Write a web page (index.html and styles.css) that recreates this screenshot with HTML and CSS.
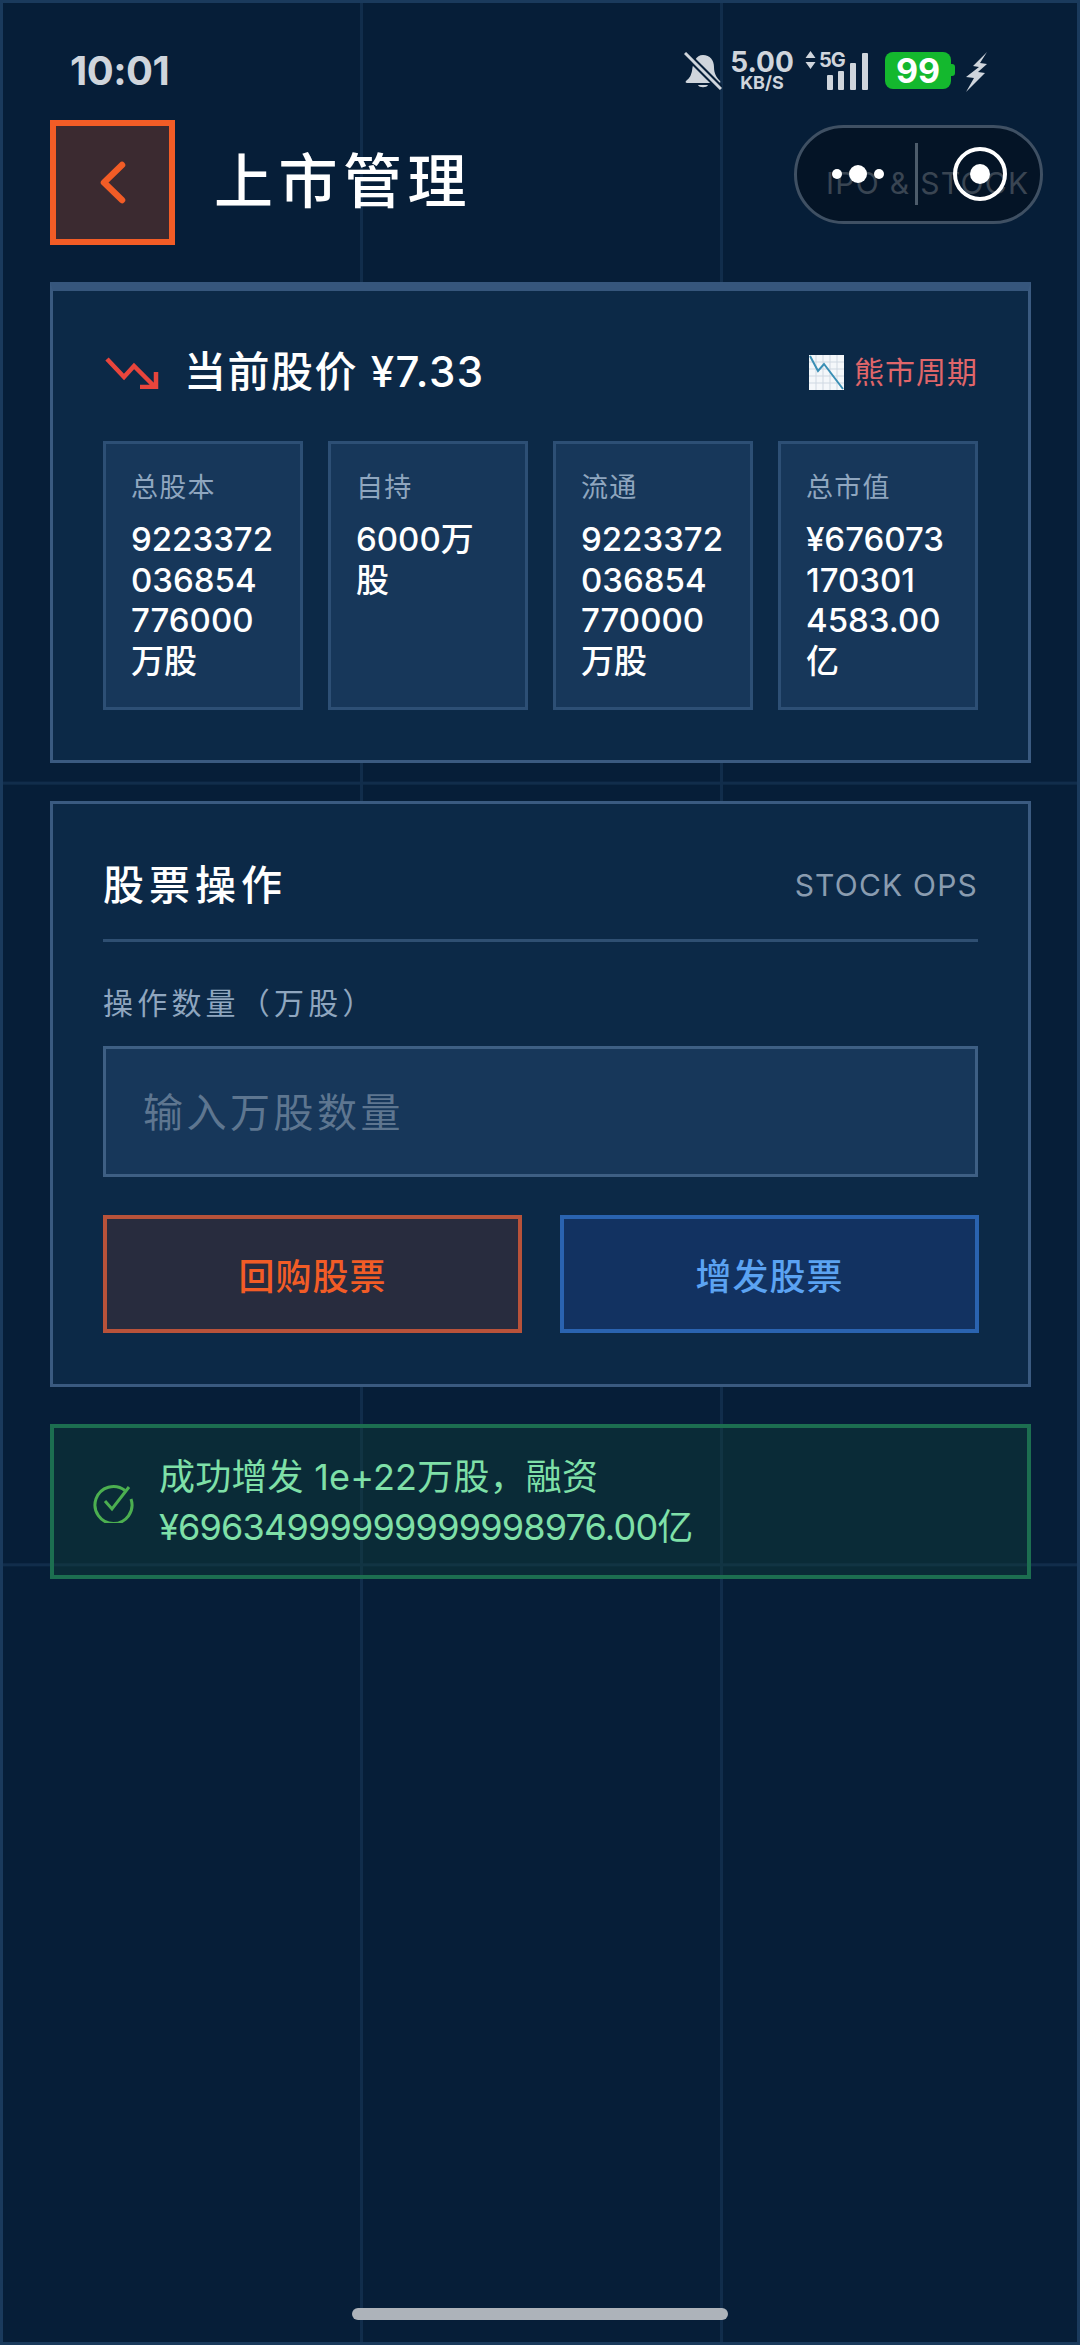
FILE: index.html
```html
<!DOCTYPE html>
<html lang="zh-CN">
<head>
<meta charset="utf-8">
<title>上市管理</title>
<link rel="stylesheet" href="styles.css">
</head>
<body>
<div class="page">
  <div class="statusbar">
    <span class="time">10:01</span>
    <div class="status-icons">
      <svg class="ic-bell" width="38" height="38" viewBox="0 0 38 38">
        <path d="M19 3c7 0 11 5 11 12 0 6 2 10 6 14 1 1 0 2-1 2H3c-1 0-2-1-1-2 4-3 5-6 6-10 1-9 4-16 11-16z" fill="#cfd5dc"/>
        <path d="M14 33h10c-1 3-9 3-10 0z" fill="#cfd5dc"/>
        <path d="M1 1l36 36" stroke="#061e38" stroke-width="7"/>
        <path d="M1 1l36 36" stroke="#cfd5dc" stroke-width="3"/>
      </svg>
      <div class="speed"><span class="speed-num">5.00</span><span class="speed-unit">KB/S</span></div>
      <div class="net">
        <svg class="ic-updown" width="11" height="18" viewBox="0 0 11 18"><path d="M5.500 0l5 7H.5zM5.500 18l5-7H.5z" fill="#cfd5dc"/></svg>
        <span class="net-5g">5G</span>
        <svg class="ic-signal" width="41" height="38" viewBox="0 0 41 38">
          <rect x="0" y="23" width="6" height="15" rx="1" fill="#cfd5dc"/>
          <rect x="11" y="19" width="6" height="19" rx="1" fill="#cfd5dc"/>
          <rect x="23" y="11" width="6" height="27" rx="1" fill="#cfd5dc"/>
          <rect x="35" y="1" width="6" height="37" rx="1" fill="#cfd5dc"/>
        </svg>
      </div>
      <div class="battery"><span class="battery-num">99</span><span class="battery-tip"></span></div>
      <svg class="ic-bolt" width="23" height="40" viewBox="0 0 23 40">
        <path d="M22 0L8 14l6 1L1 25l8 1-8 14 19-19-7-1 9-8-7-1z" fill="#cfd5dc"/>
      </svg>
    </div>
  </div>

  <header class="topbar">
    <div class="back">
      <svg width="27" height="43" viewBox="0 0 27 43"><path d="M23 4L5 21.500 23 39" fill="none" stroke="#f25c26" stroke-width="6.500" stroke-linecap="round" stroke-linejoin="round"/></svg>
    </div>
    <h1 class="title">上市管理</h1>
    <span class="tagline">IPO &amp; STOCK</span>
    <div class="capsule">
      <svg class="capsule-dots" width="54" height="20" viewBox="0 0 54 20">
        <circle cx="5" cy="10" r="5" fill="#fff"/>
        <circle cx="26" cy="10" r="9" fill="#fff"/>
        <circle cx="47" cy="10" r="5" fill="#fff"/>
      </svg>
      <span class="capsule-sep"></span>
      <svg class="capsule-ring" width="56" height="56" viewBox="0 0 56 56">
        <circle cx="28" cy="28" r="25" fill="none" stroke="#fff" stroke-width="4"/>
        <circle cx="28" cy="28" r="10" fill="#fff"/>
      </svg>
    </div>
  </header>

  <main class="content">
    <section class="card card-price">
      <div class="price-row">
        <div class="price-left">
          <svg class="ic-down" width="54" height="32" viewBox="0 0 54 32">
            <path d="M2 2l17 18 10-11 21 21M35 30h16V15" fill="none" stroke="#e8453c" stroke-width="4.500" stroke-linejoin="miter"/>
          </svg>
          <span class="price-text">当前股价 ¥7.33</span>
        </div>
        <div class="cycle">
          <svg class="ic-chart" width="35" height="35" viewBox="0 0 35 35">
            <rect width="35" height="35" fill="#f4f7fa"/>
            <path d="M7 0v35M14 0v35M21 0v35M28 0v35M0 7h35M0 14h35M0 21h35M0 28h35" stroke="#cfd8e2" stroke-width="1"/>
            <path d="M1 1l8 15 6-7 19 25" fill="none" stroke="#3a8fb5" stroke-width="2"/>
          </svg>
          <span class="cycle-text">熊市周期</span>
        </div>
      </div>
      <div class="stats">
        <div class="stat">
          <div class="stat-label">总股本</div>
          <div class="stat-value">9223372<br>036854<br>776000<br>万股</div>
        </div>
        <div class="stat">
          <div class="stat-label">自持</div>
          <div class="stat-value">6000万<br>股</div>
        </div>
        <div class="stat">
          <div class="stat-label">流通</div>
          <div class="stat-value">9223372<br>036854<br>770000<br>万股</div>
        </div>
        <div class="stat">
          <div class="stat-label">总市值</div>
          <div class="stat-value">¥676073<br>170301<br>4583.00<br>亿</div>
        </div>
      </div>
    </section>

    <section class="card card-ops">
      <div class="ops-head">
        <span class="ops-title">股票操作</span>
        <span class="ops-en">STOCK OPS</span>
      </div>
      <div class="field-label">操作数量（万股）</div>
      <div class="input"><span class="placeholder">输入万股数量</span></div>
      <div class="actions">
        <div class="btn btn-buy">回购股票</div>
        <div class="btn btn-issue">增发股票</div>
      </div>
    </section>

    <section class="notice">
      <svg class="ic-check" width="42" height="42" viewBox="0 0 42 42">
        <path d="M33 9.500A18.500 18.500 0 1 0 39 18" fill="none" stroke="#4caf50" stroke-width="3"/>
        <path d="M13 20l7 8L37 6" fill="none" stroke="#4caf50" stroke-width="3"/>
      </svg>
      <div class="notice-text">
        <div class="notice-line">成功增发 1e+22万股，融资</div>
        <div class="notice-amount">¥69634999999999998976.00亿</div>
      </div>
    </section>
  </main>

  <div class="home-bar"></div>
</div>
</body>
</html>
```

FILE: styles.css
```css
* { box-sizing: border-box; margin: 0; padding: 0; }
html, body { background: #061e38; }
body {
  width: 1080px;
  height: 2345px;
  font-family: Inter, "Noto Sans CJK SC", sans-serif;
  overflow: hidden;
}
.page {
  position: relative;
  width: 1080px;
  height: 2345px;
  border: 3px solid #1a3a5c;
  background-color: #061e38;
  background-image:
    linear-gradient(to right, #112d4b 3px, transparent 3px),
    linear-gradient(to bottom, #112d4b 3px, transparent 3px);
  background-size: 360px 781.67px;
  background-position: -3px -3px;
}

/* status bar */
.statusbar {
  height: 116px;
  display: flex;
  justify-content: space-between;
  padding: 49px 89px 0 67px;
  align-items: flex-start;
}
.time {
  font-size: 40px;
  line-height: 38px;
  font-weight: 700;
  color: #cfd5dc;
  letter-spacing: -0.5px;
}
.status-icons { display: flex; align-items: flex-start; }
.ic-bell { margin-right: 9px; }
.speed { display: flex; flex-direction: column; align-items: center; width: 62px; color: #cfd5dc; font-weight: 700; }
.speed-num { font-size: 28px; line-height: 25px; margin-top: -2px; }
.speed-unit { font-size: 18px; line-height: 16px; }
.net { position: relative; width: 63px; height: 38px; margin-left: 12px; }
.ic-updown { position: absolute; left: 0; top: -1px; }
.net-5g { position: absolute; left: 14px; top: -2px; font-size: 20px; line-height: 20px; font-weight: 700; color: #cfd5dc; letter-spacing: -1px; }
.ic-signal { position: absolute; left: 22px; top: 0; }
.battery {
  position: relative;
  width: 66px;
  height: 37px;
  margin-left: 17px;
  background: #14b82e;
  border-radius: 8px;
  display: flex;
  align-items: center;
  justify-content: center;
}
.battery-num { font-size: 34px; font-weight: 700; color: #fff; line-height: 37px; }
.battery-tip { position: absolute; right: -4px; top: 12px; width: 4px; height: 12px; background: #14b82e; border-radius: 0 3px 3px 0; }
.ic-bolt { margin-left: 14px; }

/* header */
.topbar {
  position: relative;
  height: 126px;
  padding: 0 47px;
  display: flex;
  align-items: center;
}
.back {
  width: 125px;
  height: 125px;
  border: 6px solid #f25c26;
  background: #3b2a30;
  display: flex;
  align-items: center;
  justify-content: center;
  flex-shrink: 0;
}
.title {
  margin-left: 39px;
  font-size: 59px;
  font-weight: 500;
  letter-spacing: 5.5px;
  color: #fff;
  line-height: 70px;
}
.tagline {
  position: absolute;
  left: 823px;
  top: 44px;
  font-size: 30px;
  line-height: 40px;
  letter-spacing: 1.3px;
  color: #8a98a6;
  white-space: nowrap;
}
.capsule {
  position: absolute;
  left: 791px;
  top: 6px;
  width: 249px;
  height: 99px;
  border: 3.500px solid #3f5063;
  border-radius: 50px;
  background: rgba(3, 14, 26, 0.6);
}
.capsule-dots { position: absolute; left: 35px; top: 36px; }
.capsule-sep { position: absolute; left: 118px; top: 15px; width: 3px; height: 62px; background: #4d5c6b; }
.capsule-ring { position: absolute; left: 155px; top: 18px; }

/* content */
.content {
  padding: 37px 46px 0 47px;
  display: flex;
  flex-direction: column;
}
.card {
  background: #0c2947;
  border: 3.500px solid #3a5a80;
}
.card-price {
  border-top-width: 9px;
  height: 481px;
  padding: 50px 50px 0;
  border-top-color: #36567c;
}
.price-row {
  height: 62px;
  margin-bottom: 38px;
  display: flex;
  justify-content: space-between;
  align-items: center;
}
.price-left { display: flex; align-items: center; }
.ic-down { margin-left: 2px; margin-top: 2px; }
.price-text {
  margin-left: 25px;
  font-size: 42px;
  font-weight: 500;
  letter-spacing: 1.500px;
  color: #fff;
  line-height: 50px;
}
.cycle { display: flex; align-items: center; }
.cycle-text {
  margin-left: 10px;
  font-size: 30px;
  line-height: 40px;
  letter-spacing: 1px;
  color: #e0666a;
}
.stats {
  display: grid;
  grid-template-columns: repeat(4, 200px);
  column-gap: 25px;
}
.stat {
  height: 269px;
  background: #17375a;
  border: 3.500px solid #2d4f75;
  padding: 26px 0 0 25px;
}
.stat-label {
  font-size: 27px;
  line-height: 36px;
  letter-spacing: 1.200px;
  color: #8fa6bf;
  margin-bottom: 13px;
}
.stat-value {
  font-size: 33px;
  line-height: 40.500px;
  font-weight: 500;
  color: #fff;
  white-space: nowrap;
}

.card-ops {
  margin-top: 38px;
  height: 586px;
  padding: 50px 50px 0;
}
.ops-head {
  height: 88px;
  padding-bottom: 24px;
  border-bottom: 3px solid #2f4f72;
  display: flex;
  justify-content: space-between;
  align-items: center;
}
.ops-title {
  font-size: 41px;
  line-height: 50px;
  font-weight: 500;
  letter-spacing: 5px;
  color: #fff;
}
.ops-en {
  font-size: 30px;
  line-height: 40px;
  letter-spacing: 1.200px;
  color: #8a9cb0;
}
.field-label {
  margin-top: 41px;
  font-size: 30px;
  line-height: 40px;
  letter-spacing: 4.200px;
  color: #8fa6bf;
}
.input {
  margin-top: 23px;
  height: 131px;
  background: #17375a;
  border: 3.500px solid #3e5f84;
  padding-left: 37px;
  display: flex;
  align-items: center;
}
.placeholder {
  font-size: 40px;
  letter-spacing: 3.500px;
  color: #5e7690;
  line-height: 50px;
  margin-top: 2px;
}
.actions {
  margin-top: 38px;
  display: grid;
  grid-template-columns: 419px 419px;
  column-gap: 38px;
}
.btn {
  height: 118px;
  border: 4px solid;
  display: flex;
  align-items: center;
  justify-content: center;
  font-size: 36px;
  font-weight: 500;
  letter-spacing: 1px;
}
.btn-buy { background: #282c3e; border-color: #b8523a; color: #f25c26; }
.btn-issue { background: #123261; border-color: #2a63b0; color: #5ba3f2; }

.notice {
  margin-top: 37px;
  height: 155px;
  padding-left: 38px;
  display: flex;
  align-items: center;
  background: rgba(18, 66, 56, 0.38);
  border: 4px solid #1c6e50;
}
.ic-check { flex-shrink: 0; margin-right: 25px; }
.notice-text {
  font-size: 36px;
  line-height: 50px;
  color: #7fe0a8;
  white-space: nowrap;
}
.notice-line { letter-spacing: 0.2px; }
.notice-amount { letter-spacing: -0.8px; }

.home-bar {
  position: absolute;
  left: 349px;
  top: 2305px;
  width: 376px;
  height: 12px;
  border-radius: 6px;
  background: #adb3ba;
}
```
